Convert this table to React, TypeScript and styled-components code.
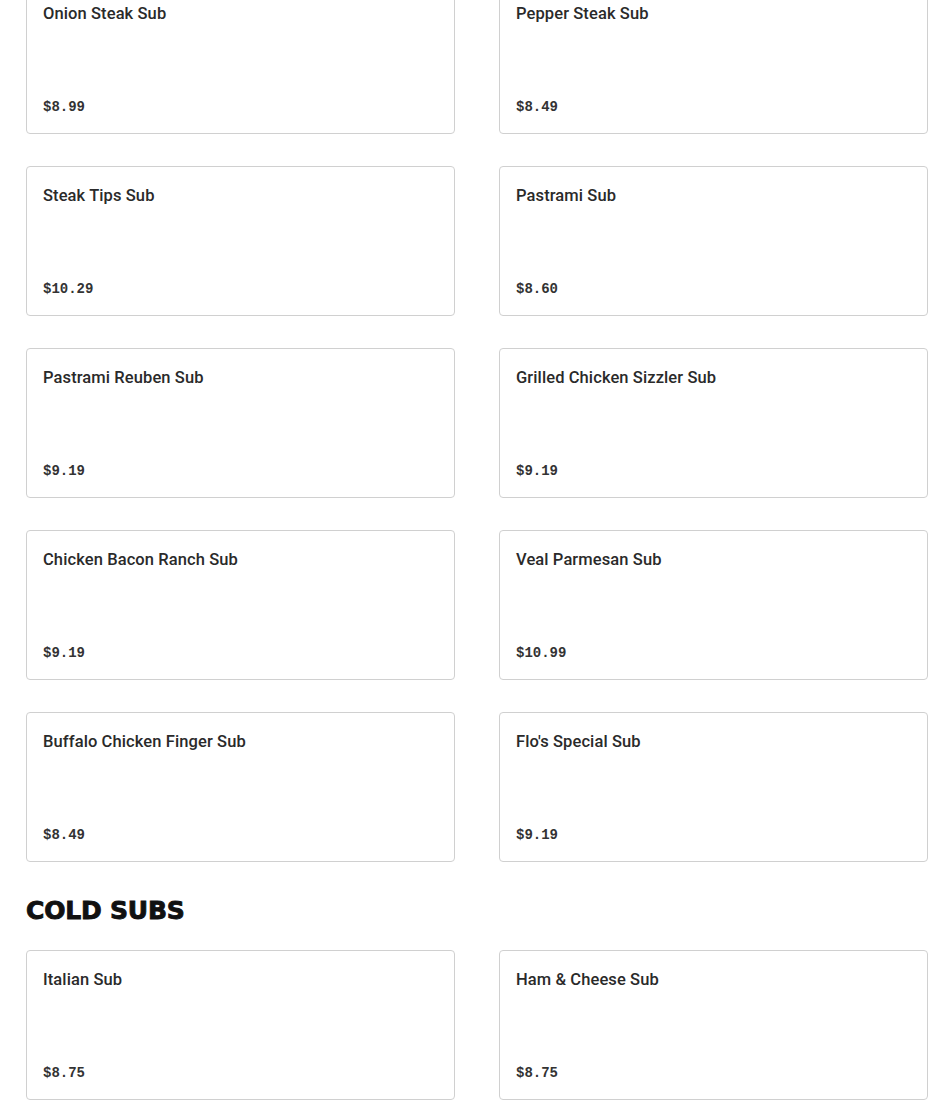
import React from 'react';
import styled, { createGlobalStyle } from 'styled-components';

const GlobalStyle = createGlobalStyle`
  body {
    margin: 0;
    background: #ffffff;
    font-family: 'Liberation Sans', Arial, sans-serif;
  }
`;

const Page = styled.div`
  width: 902px;
  margin: -16px 0 0 26px;
`;

const Grid = styled.div`
  display: grid;
  grid-template-columns: 1fr 1fr;
  column-gap: 44px;
  row-gap: 32px;
`;

const Card = styled.div`
  box-sizing: border-box;
  height: 150px;
  display: flex;
  flex-direction: column;
  justify-content: space-between;
  padding: 17px 16px 16px;
  border: 1px solid #d0d0d0;
  border-radius: 4px;
  background: #fff;
`;

const ItemName = styled.div`
  font-family: Roboto, 'Liberation Sans', Arial, sans-serif;
  font-size: 16.5px;
  font-weight: 500;
  line-height: 24px;
  letter-spacing: 0.1px;
  color: #2a2a2a;
`;

const Price = styled.div`
  font-family: 'Liberation Mono', 'Courier New', monospace;
  font-size: 14px;
  font-weight: 700;
  line-height: 20px;
  color: #333;
`;

const SectionTitle = styled.h2`
  margin: 35px 0 25px;
  font-family: 'DejaVu Sans', sans-serif;
  font-size: 25px;
  font-weight: 900;
  line-height: 28px;
  color: #111;
  letter-spacing: -0.2px;
  -webkit-text-stroke: 0.9px #111;
`;

type Item = { name: string; price: string };

const hotSubs: Item[] = [
  { name: 'Onion Steak Sub', price: '$8.99' },
  { name: 'Pepper Steak Sub', price: '$8.49' },
  { name: 'Steak Tips Sub', price: '$10.29' },
  { name: 'Pastrami Sub', price: '$8.60' },
  { name: 'Pastrami Reuben Sub', price: '$9.19' },
  { name: 'Grilled Chicken Sizzler Sub', price: '$9.19' },
  { name: 'Chicken Bacon Ranch Sub', price: '$9.19' },
  { name: 'Veal Parmesan Sub', price: '$10.99' },
  { name: 'Buffalo Chicken Finger Sub', price: '$8.49' },
  { name: "Flo's Special Sub", price: '$9.19' },
];

const coldSubs: Item[] = [
  { name: 'Italian Sub', price: '$8.75' },
  { name: 'Ham & Cheese Sub', price: '$8.75' },
];

const MenuGrid: React.FC<{ items: Item[] }> = ({ items }) => (
  <Grid>
    {items.map((item, i) => (
      <Card key={i}>
        <ItemName>{item.name}</ItemName>
        <Price>{item.price}</Price>
      </Card>
    ))}
  </Grid>
);

const App: React.FC = () => {
  return (
    <Page>
      <GlobalStyle />
      <MenuGrid items={hotSubs} />
      <SectionTitle>COLD SUBS</SectionTitle>
      <MenuGrid items={coldSubs} />
    </Page>
  );
};

export default App;
